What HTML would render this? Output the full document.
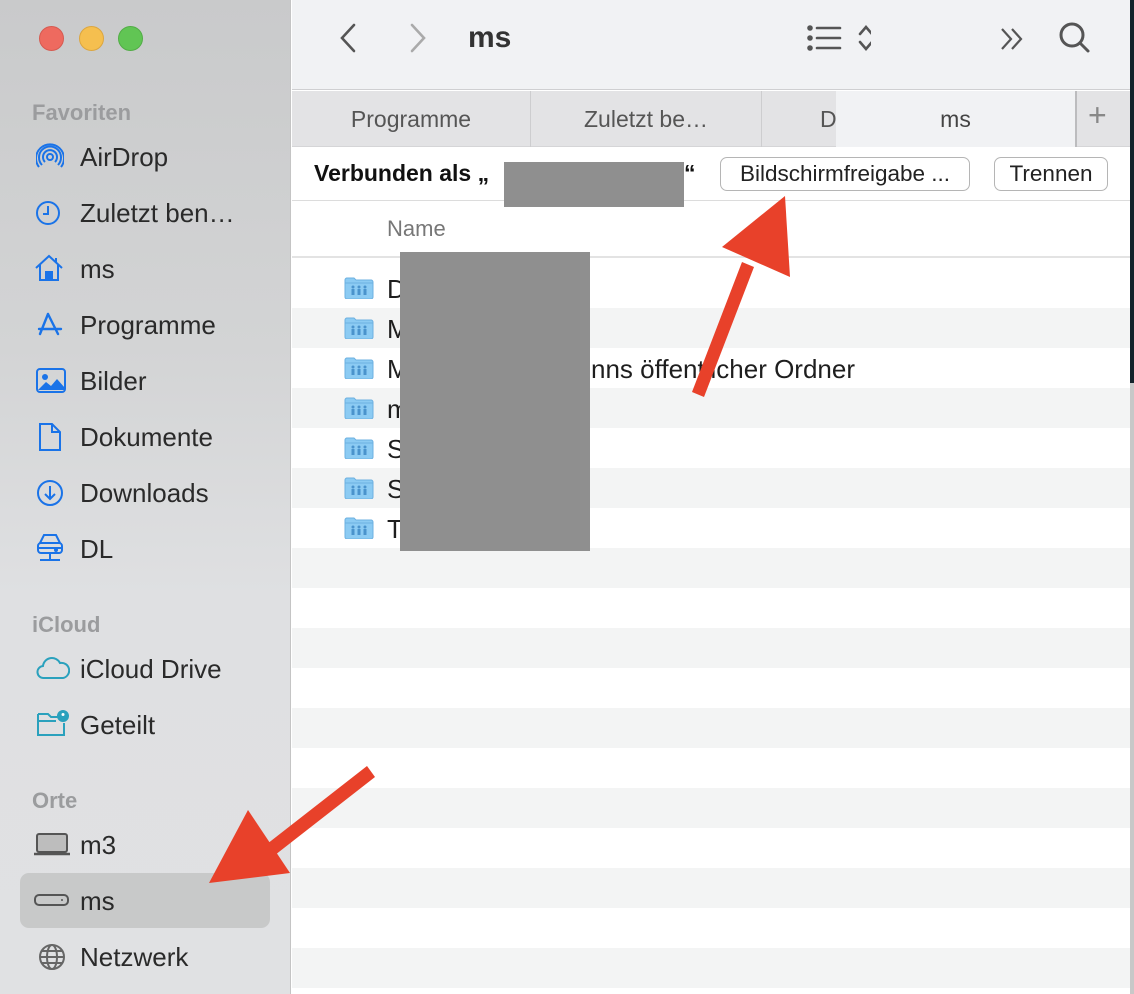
<!DOCTYPE html>
<html><head><meta charset="utf-8"><style>
*{margin:0;padding:0;box-sizing:border-box}
body{width:1134px;height:994px;overflow:hidden;position:relative;font-family:"Liberation Sans",Arial,sans-serif;background:#fff}
.a{position:absolute}
#side{left:0;top:0;width:291px;height:994px;background:linear-gradient(180deg,#c9cacb 0%,#d3d4d5 35%,#dfe0e2 60%,#e0e1e3 100%);border-right:1px solid #c4c4c4}
.sh{position:absolute;left:32px;font-size:22px;font-weight:bold;color:#9b9c9e}
.it{position:absolute;left:80px;font-size:26px;color:#2a2a2a;line-height:30px}
.ic{position:absolute;left:36px}
.row{position:absolute;left:292px;width:838px;height:40px}
.fn{position:absolute;left:387px;font-size:26px;color:#1e1e1e;line-height:30px}
.fo{position:absolute;left:344px;width:30px;height:22px}
</style></head><body>
<div class="a" style="left:1130px;top:0;width:4px;height:383px;background:#13222a"></div>
<div class="a" style="left:1130px;top:383px;width:4px;height:611px;background:#c8c8c8"></div>

<div id="side" class="a"></div>
<div class="a" style="left:39px;top:26px;width:25px;height:25px;border-radius:50%;background:#ee6a5f;border:1px solid #d65a50"></div>
<div class="a" style="left:79px;top:26px;width:25px;height:25px;border-radius:50%;background:#f5bf4f;border:1px solid #dca63f"></div>
<div class="a" style="left:118px;top:26px;width:25px;height:25px;border-radius:50%;background:#61c554;border:1px solid #52ad46"></div>

<div class="sh" style="top:100px">Favoriten</div>
<svg class="ic" style="top:143px" width="28" height="28" viewBox="0 0 28 28" fill="none" stroke="#1a73e8" stroke-width="2"><circle cx="14" cy="14" r="3"/><path d="M9 19a7 7 0 1 1 10 0M6 22a11 11 0 1 1 16 0M3 24a14 14 0 1 1 22 0"/></svg>
<div class="it" style="top:142px">AirDrop</div>
<svg class="ic" style="top:199px" width="28" height="28" viewBox="0 0 28 28" fill="none" stroke="#1a73e8" stroke-width="2"><circle cx="12" cy="14" r="11"/><path d="M12 7v8H7"/></svg>
<div class="it" style="top:198px">Zuletzt ben…</div>
<svg class="ic" style="top:253px;left:34px" width="30" height="30" viewBox="0 0 30 30" fill="none" stroke="#1a73e8" stroke-width="2"><path d="M2 15L15 3l13 12M6 12v15h18V12M22 5v5"/><rect x="12" y="19" width="6" height="8" fill="#1a73e8"/></svg>
<div class="it" style="top:254px">ms</div>
<svg class="ic" style="top:311px" width="28" height="28" viewBox="0 0 28 28" fill="none" stroke="#1a73e8" stroke-width="2.4" stroke-linecap="round"><path d="M12 3l-8 20M12 3l4 8M14 7l8 16M3 18h22"/></svg>
<div class="it" style="top:310px">Programme</div>
<svg class="ic" style="top:368px" width="30" height="26" viewBox="0 0 30 26"><rect x="1" y="1" width="28" height="23" rx="3" fill="none" stroke="#1a73e8" stroke-width="2"/><circle cx="9" cy="9" r="3" fill="#1a73e8"/><path d="M2 22l8-8 5 4 6-7 8 9v2H2z" fill="#1a73e8"/></svg>
<div class="it" style="top:366px">Bilder</div>
<svg class="ic" style="top:422px;left:38px" width="24" height="30" viewBox="0 0 24 30" fill="none" stroke="#1a73e8" stroke-width="2"><path d="M2 2h12l8 8v18H2zM14 2v8h8"/></svg>
<div class="it" style="top:422px">Dokumente</div>
<svg class="ic" style="top:479px" width="28" height="28" viewBox="0 0 28 28" fill="none" stroke="#1a73e8" stroke-width="2"><circle cx="14" cy="14" r="12"/><path d="M14 7v13M9 15l5 5 5-5"/></svg>
<div class="it" style="top:478px">Downloads</div>
<svg class="ic" style="top:533px" width="28" height="32" viewBox="0 0 28 32" fill="none" stroke="#1a73e8" stroke-width="2"><path d="M4 10L8 2h12l4 8"/><rect x="2" y="10" width="24" height="10" rx="3"/><path d="M2 15h24M14 20v7M4 27h20"/><circle cx="20" cy="17" r="1" fill="#1a73e8"/></svg>
<div class="it" style="top:534px">DL</div>

<div class="sh" style="top:612px">iCloud</div>
<svg class="ic" style="top:656px" width="34" height="24" viewBox="0 0 34 24" fill="none" stroke="#2aa1bd" stroke-width="2"><path d="M8 22a6 6 0 0 1-1-12 9 9 0 0 1 17-3 7 7 0 0 1 3 15z"/></svg>
<div class="it" style="top:654px">iCloud Drive</div>
<svg class="ic" style="top:710px" width="34" height="28" viewBox="0 0 34 28" fill="none" stroke="#2aa1bd" stroke-width="2"><path d="M2 4h10l3 3h10M2 4v21h26V13M2 11h18"/><circle cx="27" cy="6" r="5" fill="#2aa1bd"/><circle cx="27" cy="4.5" r="1.5" fill="#fff" stroke="none"/></svg>
<div class="it" style="top:710px">Geteilt</div>

<div class="sh" style="top:788px">Orte</div>
<svg class="ic" style="top:832px;left:33px" width="38" height="24" viewBox="0 0 38 24"><rect x="4" y="2" width="30" height="18" rx="2" fill="#bdbdbd" stroke="#555" stroke-width="2"/><path d="M1 22h36" stroke="#555" stroke-width="2.5"/></svg>
<div class="it" style="top:830px">m3</div>
<div class="a" style="left:20px;top:873px;width:250px;height:55px;border-radius:9px;background:#c8c9c9"></div>
<svg class="ic" style="top:892px;left:33px" width="38" height="16" viewBox="0 0 38 16"><rect x="2" y="3" width="33" height="10" rx="4" fill="none" stroke="#555" stroke-width="2"/><circle cx="29" cy="8" r="1" fill="#555"/></svg>
<div class="it" style="top:886px">ms</div>
<svg class="ic" style="top:943px;left:38px" width="28" height="28" viewBox="0 0 28 28" fill="none" stroke="#666" stroke-width="2"><circle cx="14" cy="14" r="12"/><ellipse cx="14" cy="14" rx="5" ry="12"/><path d="M2 14h24M4 8h20M4 20h20"/></svg>
<div class="it" style="top:942px">Netzwerk</div>

<!-- toolbar -->
<div class="a" style="left:292px;top:0;width:838px;height:90px;background:#f1f2f4;border-bottom:1px solid #cfcfd1"></div>
<svg class="a" style="left:336px;top:22px" width="24" height="32" viewBox="0 0 24 32" fill="none" stroke="#555" stroke-width="2.6" stroke-linecap="round"><path d="M18 3L6 16l12 13"/></svg>
<svg class="a" style="left:406px;top:22px" width="24" height="32" viewBox="0 0 24 32" fill="none" stroke="#aaa" stroke-width="2.6" stroke-linecap="round"><path d="M6 3l12 13L6 29"/></svg>
<div class="a" style="left:468px;top:21px;font-size:30px;font-weight:bold;color:#333">ms</div>
<svg class="a" style="left:805px;top:24px" width="66" height="30" viewBox="0 0 66 30" fill="none" stroke="#555" stroke-width="2.6" stroke-linecap="round"><circle cx="5" cy="4" r="1.5" fill="#555"/><circle cx="5" cy="14" r="1.5" fill="#555"/><circle cx="5" cy="24" r="1.5" fill="#555"/><path d="M12 4h23M12 14h23M12 24h23M55 10l6-7 6 7M55 18l6 7 6-7"/></svg>
<svg class="a" style="left:999px;top:26px" width="28" height="26" viewBox="0 0 28 26" fill="none" stroke="#555" stroke-width="2.2"><path d="M3 3l9 10-9 10M13 3l9 10-9 10"/></svg>
<svg class="a" style="left:1058px;top:20px" width="36" height="36" viewBox="0 0 36 36" fill="none" stroke="#555" stroke-width="3" stroke-linecap="round"><circle cx="14" cy="15" r="11"/><path d="M22 23l8 8"/></svg>

<!-- tabs -->
<div class="a" style="left:292px;top:91px;width:838px;height:56px;background:#e3e3e5;border-bottom:1px solid #d5d5d7"></div>
<div class="a" style="left:292px;top:91px;width:238px;height:56px;text-align:center;line-height:56px;font-size:23px;color:#555">Programme</div>
<div class="a" style="left:530px;top:91px;width:1px;height:56px;background:#cdcdcf"></div>
<div class="a" style="left:531px;top:91px;width:230px;height:56px;text-align:center;line-height:56px;font-size:23px;color:#555">Zuletzt be…</div>
<div class="a" style="left:761px;top:91px;width:1px;height:56px;background:#cdcdcf"></div>
<div class="a" style="left:820px;top:91px;line-height:56px;font-size:23px;color:#555">D</div>
<div class="a" style="left:836px;top:91px;width:239px;height:56px;background:#f1f2f4;text-align:center;line-height:56px;font-size:23px;color:#444">ms</div>
<div class="a" style="left:1075px;top:91px;width:2px;height:56px;background:#bcbcbe"></div>
<div class="a" style="left:1088px;top:97px;font-size:32px;color:#888;font-weight:300">+</div>

<!-- path bar -->
<div class="a" style="left:292px;top:148px;width:838px;height:53px;background:#fff;border-bottom:1px solid #dcdcdc"></div>
<div class="a" style="left:314px;top:160px;font-size:23px;font-weight:bold;color:#111">Verbunden als „</div>
<div class="a" style="left:684px;top:160px;font-size:23px;font-weight:bold;color:#111">“</div>
<div class="a" style="left:720px;top:157px;width:250px;height:34px;border:1.5px solid #b5b5b5;border-radius:7px;text-align:center;line-height:31px;font-size:22.5px;color:#222;white-space:nowrap">Bildschirmfreigabe ...</div>
<div class="a" style="left:994px;top:157px;width:114px;height:34px;border:1.5px solid #b5b5b5;border-radius:7px;text-align:center;line-height:31px;font-size:22.5px;color:#222">Trennen</div>

<div class="a" style="left:387px;top:216px;font-size:22px;color:#777">Name</div>
<div class="a" style="left:292px;top:256px;width:838px;height:2px;background:#e3e3e3"></div>

<div class="row" style="top:308px;background:#f3f4f4"></div>
<div class="row" style="top:388px;background:#f3f4f4"></div>
<div class="row" style="top:468px;background:#f3f4f4"></div>
<div class="row" style="top:548px;background:#f3f4f4"></div>
<div class="row" style="top:628px;background:#f3f4f4"></div>
<div class="row" style="top:708px;background:#f3f4f4"></div>
<div class="row" style="top:788px;background:#f3f4f4"></div>
<div class="row" style="top:868px;background:#f3f4f4"></div>
<div class="row" style="top:948px;background:#f3f4f4"></div>

<svg width="0" height="0" style="position:absolute"><defs><symbol id="f" viewBox="0 0 30 22"><path d="M1 3a2 2 0 0 1 2-2h7l2 2h15a2 2 0 0 1 2 2v15a2 2 0 0 1-2 2H3a2 2 0 0 1-2-2z" fill="#8ccbf3" stroke="#6cb0e0"/><path d="M1 6h28" stroke="#6cb0e0"/><g fill="#4a93cc"><circle cx="9" cy="10" r="1.5"/><circle cx="15" cy="10" r="1.5"/><circle cx="21" cy="10" r="1.5"/><rect x="7.5" y="12" width="3" height="6"/><rect x="13.5" y="12" width="3" height="6"/><rect x="19.5" y="12" width="3" height="6"/></g></symbol></defs></svg>
<svg class="fo" style="top:277px"><use href="#f"/></svg><div class="fn" style="top:274px">D</div>
<svg class="fo" style="top:317px"><use href="#f"/></svg><div class="fn" style="top:314px">M</div>
<svg class="fo" style="top:357px"><use href="#f"/></svg><div class="fn" style="top:354px">M</div><div class="fn" style="top:354px;left:591px">nns öffentlicher Ordner</div>
<svg class="fo" style="top:397px"><use href="#f"/></svg><div class="fn" style="top:394px">m</div>
<svg class="fo" style="top:437px"><use href="#f"/></svg><div class="fn" style="top:434px">S</div>
<svg class="fo" style="top:477px"><use href="#f"/></svg><div class="fn" style="top:474px">S</div>
<svg class="fo" style="top:517px"><use href="#f"/></svg><div class="fn" style="top:514px">T</div>

<div class="a" style="left:504px;top:162px;width:180px;height:45px;background:#8f8f8f"></div>
<div class="a" style="left:400px;top:252px;width:190px;height:299px;background:#8f8f8f"></div>

<svg class="a" style="left:0;top:0" width="1134" height="994" viewBox="0 0 1134 994">
<path d="M692 392l12 5 50-130-12-5z" fill="#e8412a"/>
<path d="M785 196l-63 51 68 30z" fill="#e8412a"/>
<path d="M367 766l8 11-100 78-8-11z" fill="#e8412a"/>
<path d="M209 883l39-73 42 63z" fill="#e8412a"/>
</svg>
</body></html>
